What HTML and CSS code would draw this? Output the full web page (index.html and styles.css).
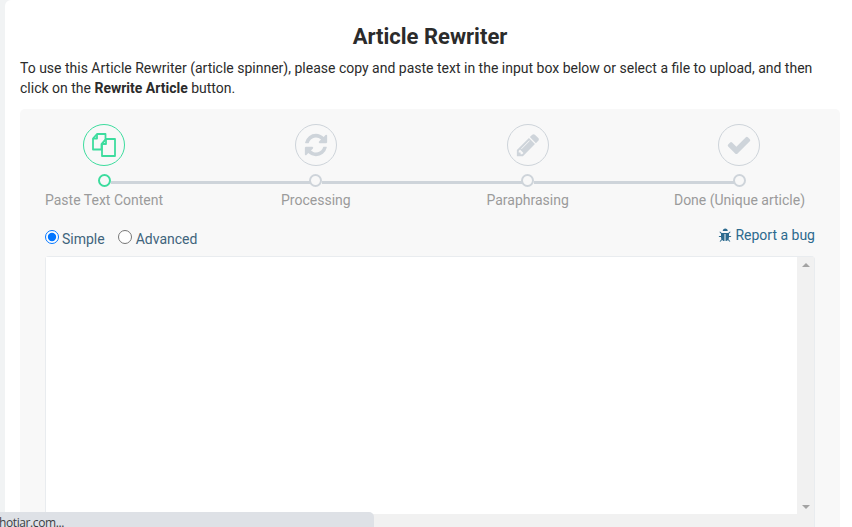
FILE: index.html
```html
<!DOCTYPE html>
<html lang="en">
<head>
<meta charset="utf-8">
<title>Article Rewriter</title>
<link rel="stylesheet" href="styles.css">
</head>
<body>
<main class="card">
  <h1 class="title">Article Rewriter</h1>
  <p class="intro">To use this Article Rewriter (article spinner), please copy and paste text in the input box below or select a file to upload, and then click on the <strong>Rewrite Article</strong> button.</p>
  <section class="panel">
    <ol class="steps">
      <li class="step active">
        <span class="step-icon">
          <svg class="ico-files" viewBox="0 0 24 24" fill="none" stroke="currentColor" stroke-width="1.8" stroke-linejoin="round"><path d="M5 1h8.5v5.5L9.5 11v5.5H1V5.5z"/><path d="M5 1v4.5H1"/><path d="M14 6h9v17H10V11z"/><path d="M14 6v5h-4"/></svg>
        </span>
        <span class="dot"></span>
        <span class="step-label">Paste Text Content</span>
      </li>
      <li class="step">
        <span class="step-icon">
          <svg class="ico" viewBox="0 0 1792 1792" fill="currentColor"><path d="M1639 1056q0 5-1 7-64 268-268 434.5t-478 166.5q-146 0-282.5-55t-243.5-157l-129 129q-19 19-45 19t-45-19-19-45v-448q0-26 19-45t45-19h448q26 0 45 19t19 45-19 45l-137 137q71 66 161 102t187 36q134 0 250-65t186-179q11-17 53-117 8-23 30-23h192q13 0 22.5 9.5t9.5 22.5zm25-800v448q0 26-19 45t-45 19h-448q-26 0-45-19t-19-45 19-45l138-138q-148-137-349-137-134 0-250 65t-186 179q-11 17-53 117-8 23-30 23h-199q-13 0-22.5-9.5t-9.5-22.5v-7q65-268 270-434.5t480-166.5q146 0 284 55.5t245 156.5l130-129q19-19 45-19t45 19 19 45z"/></svg>
        </span>
        <span class="dot"></span>
        <span class="step-label">Processing</span>
      </li>
      <li class="step">
        <span class="step-icon">
          <svg class="ico" viewBox="0 0 1792 1792" fill="currentColor"><path d="M491 1536l91-91-235-235-91 91v107h128v128h107zm523-928q0-22-22-22-10 0-17 7l-542 542q-7 7-7 17 0 22 22 22 10 0 17-7l542-542q7-7 7-17zm-54-192l416 416-832 832h-416v-416zm683 96q0 53-37 90l-166 166-416-416 166-165q36-38 90-38 53 0 91 38l235 234q37 39 37 91z"/></svg>
        </span>
        <span class="dot"></span>
        <span class="step-label">Paraphrasing</span>
      </li>
      <li class="step last">
        <span class="step-icon">
          <svg class="ico" viewBox="0 0 1792 1792" fill="currentColor"><path d="M1671 566q0 40-28 68l-724 724-136 136q-28 28-68 28t-68-28l-136-136-362-362q-28-28-28-68t28-68l136-136q28-28 68-28t68 28l294 295 656-657q28-28 68-28t68 28l136 136q28 28 28 68z"/></svg>
        </span>
        <span class="dot"></span>
        <span class="step-label">Done (Unique article)</span>
      </li>
    </ol>
    <div class="options">
      <div class="modes">
        <label class="mode mode-simple"><input type="radio" name="mode" class="radio" checked>Simple</label>
        <label class="mode"><input type="radio" name="mode" class="radio">Advanced</label>
      </div>
      <a class="bug-link" href="#">
        <svg class="ico-bug" viewBox="0 0 1664 1792" fill="currentColor"><path d="M1632 1088q0 26-19 45t-45 19h-224q0 171-67 290l208 209q19 19 19 45t-19 45q-18 19-45 19t-45-19l-198-197q-5 5-15 13t-42 28.5-65 36.5-82 29-97 13v-896h-128v896q-51 0-101.5-13.5t-87-33-66-39-43.5-32.5l-15-14-183 207q-20 21-48 21-24 0-43-16-19-18-20.5-44.5t15.5-46.5l202-227q-58-114-58-274h-224q-26 0-45-19t-19-45 19-45 45-19h224v-294l-173-173q-19-19-19-45t19-45 45-19 45 19l173 173h844l173-173q19-19 45-19t45 19 19 45-19 45l-173 173v294h224q26 0 45 19t19 45zm-448-704h-640q0-133 93.5-226.5t226.5-93.5 226.5 93.5 93.5 226.5z"/></svg>
        Report a bug
      </a>
    </div>
    <div class="editor">
      <div class="editor-row">
        <div class="editor-input"></div>
        <div class="scrollbar">
          <span class="arrow-up"></span>
          <span class="arrow-down"></span>
        </div>
      </div>
    </div>
  </section>
</main>
<div class="status-bubble">hotjar.com...</div>
</body>
</html>
```
FILE: styles.css
```css
* { box-sizing: border-box; }

html, body {
  height: 100%;
  margin: 0;
}

body {
  background: #f1f3f4;
  font-family: Roboto, "Liberation Sans", sans-serif;
  font-size: 14px;
  line-height: 20px;
  color: #212529;
  overflow: hidden;
}

.card {
  height: 527px;
  margin-left: 5px;
  padding: 24px 12px 0 15px;
  background: #fff;
  border-radius: 6px 0 0 0;
  overflow: hidden;
}

.title {
  margin: 0 0 8px;
  font-size: 22px;
  line-height: 26px;
  font-weight: 700;
  text-align: center;
  color: #2b2b2b;
}

.intro {
  margin: 0 0 11px;
  color: #2b2b2b;
}

.panel {
  height: 430px;
  padding: 15px 25px 0;
  background: #f8f8f8;
  border-radius: 5px 5px 0 0;
}

.steps {
  display: grid;
  grid-template-columns: repeat(4, 118px);
  justify-content: space-between;
  margin: 0;
  padding: 0 16.5px 0 0;
  list-style: none;
}

.step {
  position: relative;
  display: flex;
  flex-direction: column;
  align-items: center;
}

.step-icon {
  display: flex;
  align-items: center;
  justify-content: center;
  width: 42px;
  height: 42px;
  border: 1px solid #ced4da;
  border-radius: 50%;
  color: #ced4da;
}

.ico { width: 26px; height: 26px; }
.ico-files { width: 24px; height: 24px; }

.dot {
  position: relative;
  width: 13px;
  height: 13px;
  margin-top: 8px;
  background: #f8f8f8;
  border: 2px solid #ced4da;
  border-radius: 50%;
}

.dot::after {
  content: "";
  position: absolute;
  left: 11px;
  top: 4.5px;
  width: 200px;
  height: 3px;
  background: #ced4da;
}

.last .dot::after { display: none; }

.active .step-icon { border-color: #3ddc9e; color: #3ddc9e; }
.active .dot { border-color: #3ddc9e; }

.step-label {
  margin-top: 3px;
  font-size: 14px;
  line-height: 20px;
  white-space: nowrap;
  color: #9b9b9b;
}

.options {
  display: flex;
  align-items: flex-start;
  justify-content: space-between;
  height: 29px;
  margin-top: 17px;
}

.modes {
  display: flex;
  gap: 13px;
  padding-top: 2px;
}

.mode {
  display: flex;
  align-items: center;
  color: #40647c;
}

.radio {
  width: 14px;
  height: 14px;
  margin: 0 3px 5px 0;
}

.mode + .mode .radio { margin-right: 4px; }

.bug-link {
  display: flex;
  align-items: center;
  gap: 3px;
  margin-top: -2px;
  color: #2c6a8e;
  text-decoration: none;
}

.ico-bug { width: 14px; height: 14px; }

.editor {
  height: 271px;
  border: 1px solid #e9ecef;
  border-bottom: 0;
  border-radius: 4px 4px 0 0;
  background: #f1f1f1;
}

.editor-row {
  display: flex;
  height: 257px;
}

.editor-input {
  flex: 1;
  background: #fff;
}

.scrollbar {
  display: flex;
  flex-direction: column;
  justify-content: space-between;
  align-items: center;
  width: 17px;
  padding: 6px 0 5px;
  background: #f1f1f1;
}

.arrow-up, .arrow-down {
  width: 0;
  height: 0;
  border-left: 4px solid transparent;
  border-right: 4px solid transparent;
}

.arrow-up { border-bottom: 4px solid #a3a3a3; }
.arrow-down { border-top: 4px solid #a3a3a3; }

.status-bubble {
  position: absolute;
  left: 0;
  bottom: 0;
  width: 374px;
  height: 15px;
  background: #dee1e6;
  border-radius: 0 5px 0 0;
  font-family: "Open Sans", "Liberation Sans", sans-serif;
  font-size: 12px;
  letter-spacing: -0.4px;
  text-indent: -1px;
  line-height: 22px;
  color: #3c4043;
  overflow: hidden;
}
```
